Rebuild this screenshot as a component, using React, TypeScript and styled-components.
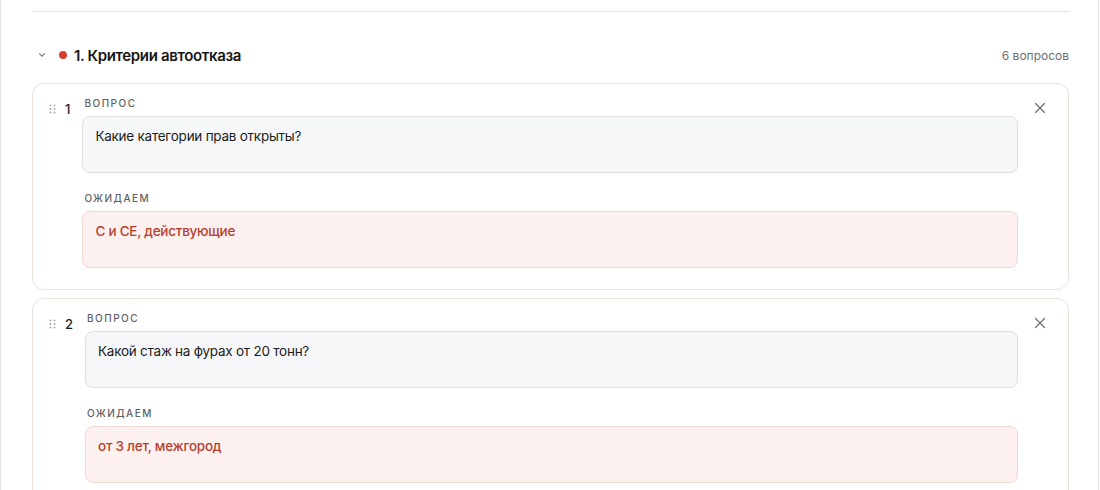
import React from "react";
import styled, { createGlobalStyle } from "styled-components";

const GlobalStyle = createGlobalStyle`
  body {
    margin: 0;
    background: #ffffff;
    font-family: Inter, "Noto Sans", "Liberation Sans", sans-serif;
    color: #1b1b1b;
  }
`;

interface Question {
  id: number;
  question: string;
  expected: string;
}

const questions: Question[] = [
  { id: 1, question: "Какие категории прав открыты?", expected: "C и CE, действующие" },
  { id: 2, question: "Какой стаж на фурах от 20 тонн?", expected: "от 3 лет, межгород" },
];

const DragIcon = () => (
  <svg width="8" height="10" viewBox="0 0 8 10" fill="#a9a9a9">
    <circle cx="1.5" cy="1.5" r="1" />
    <circle cx="5.5" cy="1.5" r="1" />
    <circle cx="1.5" cy="5" r="1" />
    <circle cx="5.5" cy="5" r="1" />
    <circle cx="1.5" cy="8.5" r="1" />
    <circle cx="5.5" cy="8.5" r="1" />
  </svg>
);

const App = () => {
  return (
    <>
      <GlobalStyle />
      <Page>
        <Panel>
          <Divider />
          <SectionHeader>
            <HeaderLeft>
              <Chevron>
                <svg width="8" height="6" viewBox="0 0 8 6" fill="none">
                  <path d="M1.5 1.8 L4 4.2 L6.5 1.8" stroke="#8a8a8a" strokeWidth="1.2" strokeLinecap="round" strokeLinejoin="round" />
                </svg>
              </Chevron>
              <Dot />
              <Title>1. Критерии автоотказа</Title>
            </HeaderLeft>
            <Count>6 вопросов</Count>
          </SectionHeader>

          <CardList>
            {questions.map((q) => (
              <Card key={q.id}>
                <Handle>
                  <DragIcon />
                  <Num>{q.id}</Num>
                </Handle>
                <Body>
                  <Label>Вопрос</Label>
                  <Field>{q.question}</Field>
                  <Label $spaced>Ожидаем</Label>
                  <Field $expected>{q.expected}</Field>
                </Body>
                <CloseButton>
                  <svg width="12" height="12" viewBox="0 0 12 12" fill="none">
                    <path d="M1.5 1.5 L10.5 10.5 M10.5 1.5 L1.5 10.5" stroke="#6e6e6e" strokeWidth="1.2" strokeLinecap="round" />
                  </svg>
                </CloseButton>
              </Card>
            ))}
          </CardList>
        </Panel>
      </Page>
    </>
  );
};

export default App;

const Page = styled.div`
  padding-right: 1px;
  height: 490px;
  overflow: hidden;
`;

const Panel = styled.div`
  border-left: 1px solid #e4e4e4;
  border-right: 1px solid #e4e4e4;
  padding: 11px 29px 0 31px;
  min-height: 490px;
  box-sizing: border-box;
`;

const Divider = styled.div`
  height: 1px;
  background: #e2e2e2;
`;

const SectionHeader = styled.div`
  display: flex;
  align-items: center;
  justify-content: space-between;
  height: 24px;
  margin: 31px 0 16px;
`;

const HeaderLeft = styled.div`
  display: flex;
  align-items: center;
`;

const Chevron = styled.span`
  display: flex;
  width: 8px;
  margin-left: 6px;
  margin-right: 13px;
`;

const Dot = styled.span`
  width: 8px;
  height: 8px;
  border-radius: 50%;
  background: #d4402e;
  margin-right: 7px;
`;

const Title = styled.span`
  font-size: 15px;
  font-weight: 600;
  letter-spacing: -0.35px;
  color: #161616;
`;

const Count = styled.span`
  font-size: 12px;
  color: #6f6f6f;
`;

const CardList = styled.div`
  display: flex;
  flex-direction: column;
  gap: 8px;
`;

const Card = styled.div`
  display: flex;
  align-items: flex-start;
  gap: 12px;
  border: 1px solid #ebe1d9;
  border-radius: 12px;
  padding: 12px 17px 21px 16px;
  background: #ffffff;
`;

const Handle = styled.div`
  display: flex;
  align-items: center;
  gap: 8px;
  margin-top: 3px;
  height: 20px;
`;

const Num = styled.span`
  font-size: 13px;
  font-weight: 500;
  color: #1d1d1d;
`;

const Body = styled.div`
  flex: 1;
  display: flex;
  flex-direction: column;
`;

const Label = styled.div<{ $spaced?: boolean }>`
  font-size: 10px;
  line-height: 14px;
  font-weight: 500;
  letter-spacing: 1.5px;
  text-transform: uppercase;
  color: #5f5f66;
  margin-top: ${(p) => (p.$spaced ? "18px" : "0")};
  margin-bottom: 6px;
  padding-left: 2px;
`;

const Field = styled.div<{ $expected?: boolean }>`
  height: 57px;
  box-sizing: border-box;
  padding: 9px 12px;
  border-radius: 8px;
  font-size: 13.5px;
  line-height: 20px;
  letter-spacing: -0.25px;
  border: 1px solid ${(p) => (p.$expected ? "#f3d7d1" : "#dcdfe4")};
  background: ${(p) => (p.$expected ? "#fdf1ef" : "#f6f7f9")};
  color: ${(p) => (p.$expected ? "#b63f2d" : "#1c1c1c")};
  font-weight: ${(p) => (p.$expected ? 500 : 400)};
`;

const CloseButton = styled.button`
  display: flex;
  align-items: center;
  justify-content: center;
  width: 22px;
  height: 22px;
  margin-top: 1px;
  margin-left: -1px;
  padding: 0;
  border: none;
  background: transparent;
  cursor: pointer;
`;
